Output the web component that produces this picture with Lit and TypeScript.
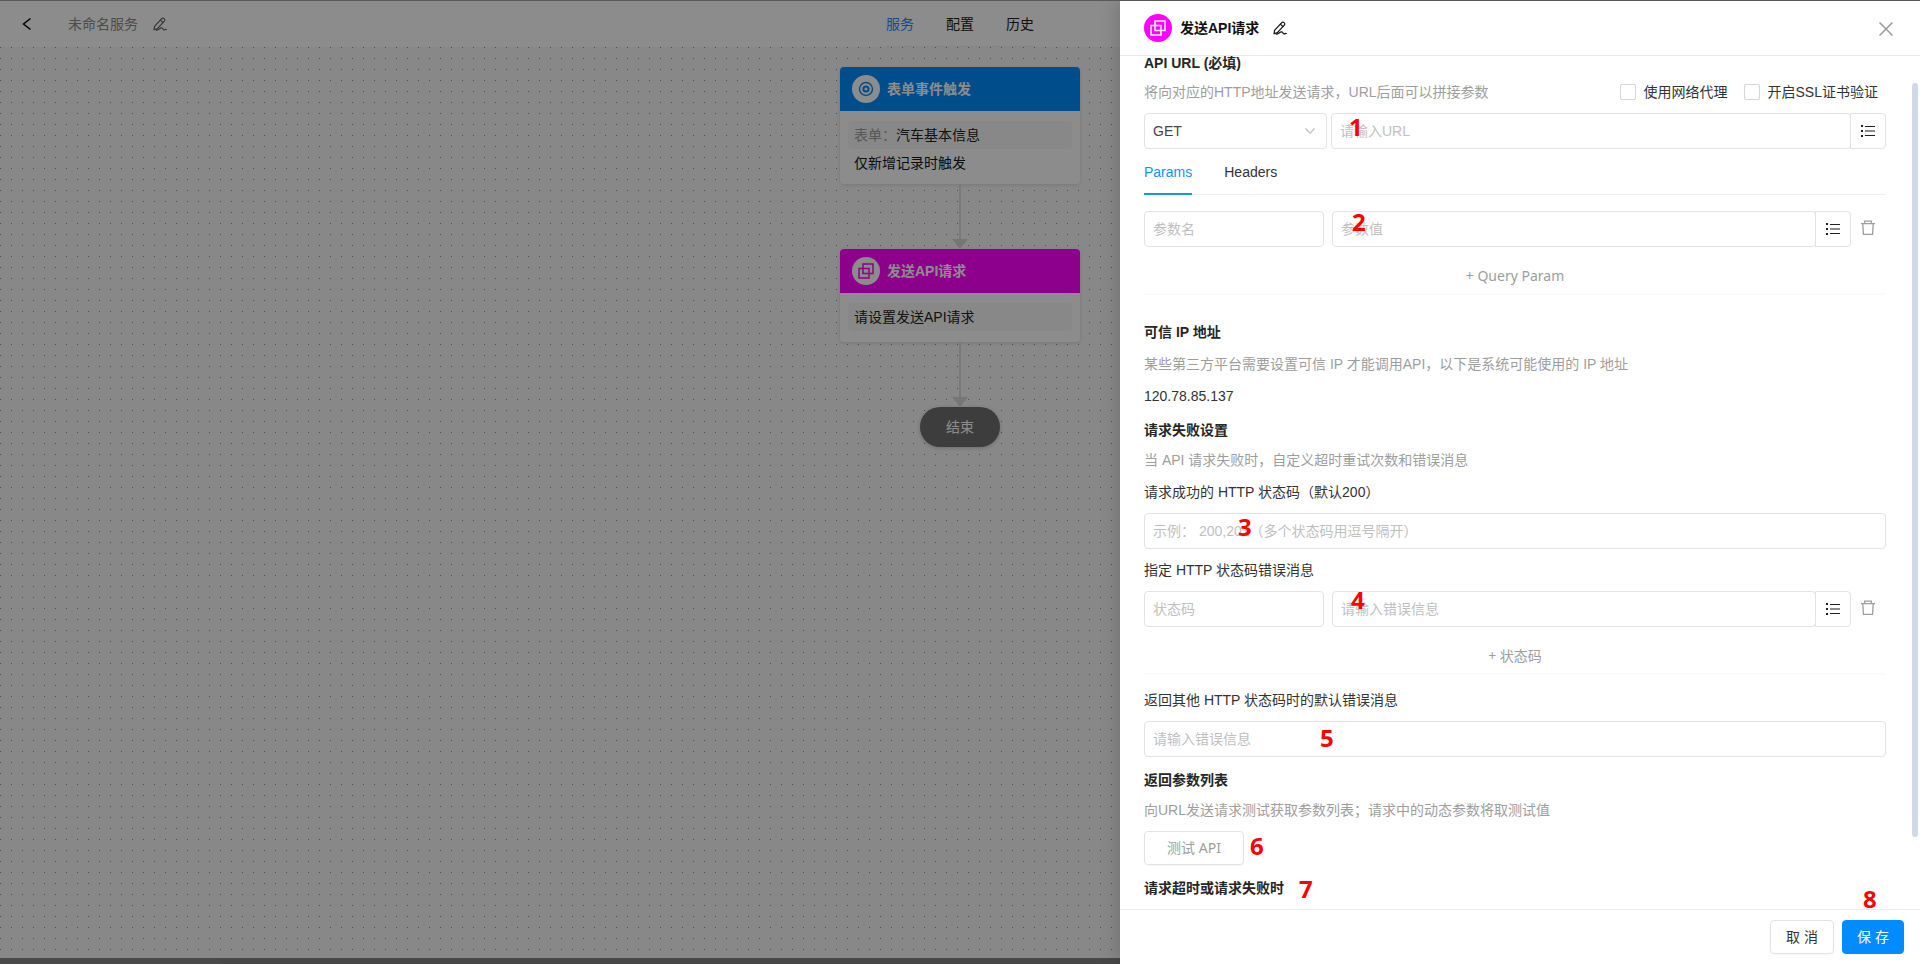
import { LitElement, html, css, svg, nothing } from "lit";
import { customElement, property, state } from "lit/decorators.js";
import { classMap } from "lit/directives/class-map.js";

const editIcon = svg`<svg width="14" height="14" viewBox="0 0 14 14" fill="none" stroke="currentColor" stroke-width="1.2" stroke-linejoin="round" stroke-linecap="round">
  <path d="M1 12.8 1.7 9.2 8.8 1.6a1.5 1.5 0 0 1 2.2 0l.3.3a1.5 1.5 0 0 1 0 2.2L4.4 11.6 1 12.8Z"/>
  <path d="M7.4 3.1 9.9 5.6M3.2 13.2c2.4 0 3.6-2.6 5.6-2.3 1.4.2 1 2 2.3 1.9.9 0 1.3-.5 2.2-.3"/>
</svg>`;
const listIcon = svg`<svg width="14" height="12" viewBox="0 0 14 12" aria-hidden="true">
  <path fill="#212121" d="M0 0h2v2H0zM0 5h2v2H0zM0 10h2v2H0zM4 1h10v1H4zM4 10h10v1H4z"/><path fill="#8c8c8c" d="M4 5h10v2H4z"/>
</svg>`;
const trashIcon = svg`<svg width="14" height="16" viewBox="0 0 14 16" fill="none" stroke="#9e9e9e" stroke-width="1.3" aria-hidden="true">
  <path d="M0 3.6h14M3.6 3.4V1.2h6.8v2.2M1.8 3.8l.6 10.6h9.2l.6-10.6"/>
</svg>`;
const copyIcon = svg`<svg width="16" height="16" viewBox="0 0 16 16" fill="none" stroke="currentColor" stroke-width="1.5" aria-hidden="true">
  <path d="M5 1h10v9.500H5zM1 5.500h10V15H1z"/>
</svg>`;
const targetIcon = svg`<svg width="16" height="16" viewBox="0 0 16 16" fill="none" stroke="currentColor" aria-hidden="true">
  <circle cx="8" cy="8" r="6.500" stroke-width="1.400"/><circle cx="8" cy="8" r="2.600" stroke-width="2"/>
</svg>`;

const FONT = css`
  * { box-sizing: border-box; }
  :host, button, input, select {
    font-family: "Liberation Sans", "Noto Sans CJK SC", sans-serif;
    font-size: 14px;
    line-height: 22px;
  }
  button { margin: 0; padding: 0; border: 0; background: none; color: inherit; cursor: pointer; }
  svg { display: block; }
`;

const BADGE = css`
  .badge {
    display: flex;
    align-items: center;
    justify-content: center;
    width: 28px;
    height: 28px;
    border-radius: 50%;
  }
`;

@customElement("flow-node")
class FlowNode extends LitElement {
  @property() heading = "";
  @property() kind = "trigger";

  static styles = [FONT, BADGE, css`
    :host { display: block; width: 240px; border-radius: 4px; background: #fff; box-shadow: 0 1px 4px rgba(0, 0, 0, 0.12); }
    .head { display: flex; align-items: center; gap: 7px; height: 44px; padding: 0 12px; border-radius: 4px 4px 0 0; color: #fff; font-weight: 700; }
    .trigger { background: #008cff; }
    .api { background: #f0f; }
    .badge { background: #fff; }
    .trigger .badge { color: #008cff; }
    .api .badge { color: #f0f; }
    .body { min-height: 49px; padding: 10px 8px; }
  `];

  render() {
    return html`
      <div class=${classMap({ head: true, [this.kind]: true })}>
        <span class="badge">${this.kind === "api" ? copyIcon : targetIcon}</span>
        <span>${this.heading}</span>
      </div>
      <div class="body"><slot></slot></div>`;
  }
}

@customElement("service-canvas")
class ServiceCanvas extends LitElement {
  static styles = [FONT, css`
    :host { display: flex; flex-direction: column; height: 100%; background: #fff; color: #212121; }
    .bar { display: grid; grid-template-columns: 1fr auto 1fr; align-items: stretch; height: 46px; flex: none; }
    .left { display: flex; align-items: center; padding-left: 20px; }
    .name { margin-left: 34px; margin-right: 15px; color: #8c8c8c; }
    .edit { color: #666; }
    .tabs { display: flex; align-items: center; gap: 32px; border-bottom: 1px solid #f0f0f0; }
    .tabs a { color: inherit; text-decoration: none; }
    .tabs .on { color: #1890ff; }
    .canvas {
      flex: 1;
      display: flex;
      flex-direction: column;
      align-items: center;
      padding-top: 20px;
      background: #f8f8f8 radial-gradient(circle at 0.5px 0.5px, #8a8a8a 0 0.7px, transparent 0.8px) 0 0 / 11px 11px;
    }
    .box { padding: 3px 6px; border-radius: 4px; background: #f8f8f8; }
    .line { padding: 3px 6px 0; color: #0b1a26; }
    .key { color: #9e9e9e; }
    .link { display: flex; flex-direction: column; align-items: center; height: 65px; }
    .link::before { content: ""; flex: 1; width: 2px; background: #dcdcdc; }
    .link::after { content: ""; border: 8px solid transparent; border-top: 10px solid #d8d8d8; border-bottom: 0; }
    .end { display: flex; align-items: center; justify-content: center; width: 80px; height: 40px; border-radius: 20px; background: #707070; color: #fff; box-shadow: 0 1px 4px rgba(0, 0, 0, 0.2); }
    .track { flex: none; height: 6px; background: #7f8380; }
    .thumb { width: 222px; height: 6px; background: #888483; }
  `];

  render() {
    return html`
      <header class="bar">
        <div class="left">
          <button aria-label="返回"><svg width="14" height="14" viewBox="0 0 14 14" fill="none" stroke="#000" stroke-width="1.500"><path d="M10.500 1.500 3.500 7l7 5.500"/></svg></button>
          <span class="name">未命名服务</span>
          <button class="edit" aria-label="编辑名称">${editIcon}</button>
        </div>
        <nav class="tabs"><a class="on" href="#service">服务</a><a href="#config">配置</a><a href="#history">历史</a></nav>
      </header>
      <main class="canvas">
        <flow-node heading="表单事件触发" kind="trigger">
          <div class="box"><span class="key">表单：</span>汽车基本信息</div>
          <div class="line">仅新增记录时触发</div>
        </flow-node>
        <div class="link"></div>
        <flow-node heading="发送API请求" kind="api">
          <div class="box">请设置发送API请求</div>
        </flow-node>
        <div class="link"></div>
        <div class="end">结束</div>
      </main>
      <div class="track"><div class="thumb"></div></div>`;
  }
}

@customElement("request-drawer")
class RequestDrawer extends LitElement {
  @state() tab = "Params";

  static styles = [FONT, BADGE, css`
    :host { display: flex; flex-direction: column; background: #fff; color: #333; box-shadow: -4px 0 16px rgba(0, 0, 0, 0.15); }
    .head { display: flex; align-items: center; flex: none; height: 55px; padding: 0 24px; border-bottom: 1px solid #ebebeb; color: #111; }
    .badge { background: #f0f; color: #fff; }
    .name { margin: 0 14px 0 8px; font-size: 14px; font-weight: 700; }
    .close { margin-left: auto; padding: 2px 3px 0; }
    .body { flex: 1; min-height: 0; display: flex; }
    .form { flex: 1; min-width: 0; padding: 0 26px 0 24px; }
    .scroll { flex: none; width: 6px; margin: 27px 2px 72px 0; border-radius: 3px; background: #cfdae6; }
    h3 { position: relative; margin: 12px 0 0; font-size: 14px; font-weight: 700; line-height: 22px; color: #262626; }
    .first { margin: 0; line-height: 14px; }
    .wide { margin-top: 26px; }
    p { margin: 8px 0 0; color: #9e9e9e; }
    .loose { margin-top: 10px; }
    .dark { color: #333; }
    .intro { display: flex; justify-content: space-between; margin-top: 11px; }
    .intro p { margin: 0; }
    .checks { display: flex; gap: 16px; padding-right: 8px; }
    .check { display: flex; align-items: center; gap: 8px; }
    .check input { appearance: none; width: 16px; height: 16px; margin: 0; border: 1px solid #d6d6d6; border-radius: 2px; background: #fff; }
    .label { display: block; margin-top: 10px; }
    .after-rule { margin-top: 14px; }
    .row { display: flex; margin-top: 10px; }
    .row.method { gap: 4px; }
    .row.pair { gap: 8px; }
    .params { margin-top: 16px; }
    .key, .picker { flex: none; }
    .key { width: 180px; }
    .picker { position: relative; width: 183px; }
    .picker svg { position: absolute; right: 12px; top: 15px; pointer-events: none; }
    .group { position: relative; flex: 1; display: flex; min-width: 0; }
    input.text, select {
      appearance: none;
      display: block;
      width: 100%;
      height: 36px;
      padding: 0 8px;
      border: 1px solid #e3e3e3;
      border-radius: 4px;
      background: #fff;
      color: #444;
      outline: 0;
    }
    input.text::placeholder { color: #bfbfbf; opacity: 1; }
    .pick { flex: none; display: flex; align-items: center; justify-content: center; width: 36px; height: 36px; margin-left: -1px; padding-right: 1px; border: 1px solid #e3e3e3; border-radius: 0 4px 4px 0; }
    .trash { flex: none; width: 27px; padding: 9px 0 0 2px; align-self: flex-start; }
    .tabs { display: flex; gap: 32px; height: 46px; padding-top: 12px; border-bottom: 1px solid #efefef; }
    .tabs button { height: 34px; padding-bottom: 10px; border-bottom: 2px solid transparent; }
    .tabs .on { color: #1890ff; border-color: #1890ff; }
    .add { display: block; width: 100%; margin-top: 18px; padding-bottom: 6px; border-bottom: 2px solid #fafafa; color: #9e9e9e; font-family: "Noto Sans", "Noto Sans CJK SC", sans-serif; text-align: center; }
    .btn { position: relative; height: 34px; border: 1px solid #e3e3e3; border-radius: 4px; box-shadow: 0 1px 2px rgba(0, 0, 0, 0.04); }
    .test { width: 100px; color: #9e9e9e; font-family: "Noto Sans", "Noto Sans CJK SC", sans-serif; }
    .foot { display: flex; flex: none; justify-content: flex-end; gap: 8px; height: 55px; padding: 10px 16px 0; border-top: 1px solid #ebebeb; }
    .cancel { width: 64px; }
    .save { width: 62px; border-color: #008cff; background: #008cff; color: #fff; }
    .mark { position: absolute; z-index: 1; color: #f00; font: 700 24px/24px "Noto Sans", sans-serif; pointer-events: none; }
    .m1 { left: 18px; top: 2px; }
    .m2 { left: 20px; top: -1px; }
    .m3 { left: 94px; top: 2px; }
    .m4 { left: 19px; top: -3px; }
    .m5 { left: 176px; top: 5px; }
    .m6 { left: 106px; top: 3px; }
    .m7 { left: 155px; top: 0; }
    .m8 { left: 20px; top: -34px; }
  `];

  private mark(n: number) {
    return html`<span class="mark m${n}">${n}</span>`;
  }

  private field(placeholder: string, id: string, n: number, picker: boolean) {
    return html`<div class="group">
      <input class="text" id=${id} aria-label=${placeholder} placeholder=${placeholder} />
      ${picker ? html`<button class="pick" aria-label="选择字段">${listIcon}</button>` : nothing}
      ${this.mark(n)}
    </div>`;
  }

  render() {
    return html`
      <header class="head">
        <span class="badge">${copyIcon}</span>
        <h2 class="name">发送API请求</h2>
        <button aria-label="编辑名称">${editIcon}</button>
        <button class="close" aria-label="关闭"><svg width="14" height="14" viewBox="0 0 14 14" stroke="#999" stroke-width="1.500"><path d="M.5.5l13 13M13.500.5l-13 13"/></svg></button>
      </header>
      <div class="body">
        <div class="form">
          <h3 class="first">API URL (必填)</h3>
          <div class="intro">
            <p>将向对应的HTTP地址发送请求，URL后面可以拼接参数</p>
            <div class="checks">
              <label class="check"><input type="checkbox" />使用网络代理</label>
              <label class="check"><input type="checkbox" />开启SSL证书验证</label>
            </div>
          </div>
          <div class="row method">
            <div class="picker">
              <select aria-label="请求方式"><option>GET</option><option>POST</option><option>PUT</option><option>DELETE</option></select>
              <svg width="10" height="6" viewBox="0 0 10 6" fill="none" stroke="#bfbfbf" stroke-width="1.200"><path d="M.5.5 5 5.200 9.500.5"/></svg>
            </div>
            ${this.field("请输入URL", "url", 1, true)}
          </div>
          <div class="tabs" role="tablist">
            ${["Params", "Headers"].map((t) => html`<button role="tab" class=${classMap({ on: t === this.tab })} @click=${() => (this.tab = t)}>${t}</button>`)}
          </div>
          <div class="row pair params">
            <div class="key"><input class="text" aria-label="参数名" placeholder="参数名" /></div>
            ${this.field("参数值", "param", 2, true)}
            <button class="trash" aria-label="删除参数">${trashIcon}</button>
          </div>
          <button class="add">+ Query Param</button>

          <h3 class="wide">可信 IP 地址</h3>
          <p class="loose">某些第三方平台需要设置可信 IP 才能调用API，以下是系统可能使用的 IP 地址</p>
          <p class="loose dark">120.78.85.137</p>

          <h3>请求失败设置</h3>
          <p>当 API 请求失败时，自定义超时重试次数和错误消息</p>
          <label class="label" for="ok">请求成功的 HTTP 状态码（默认200）</label>
          <div class="row">${this.field("示例： 200,201（多个状态码用逗号隔开）", "ok", 3, false)}</div>
          <label class="label" for="code">指定 HTTP 状态码错误消息</label>
          <div class="row pair">
            <div class="key"><input class="text" id="code" placeholder="状态码" /></div>
            ${this.field("请输入错误信息", "message", 4, true)}
            <button class="trash" aria-label="删除状态码">${trashIcon}</button>
          </div>
          <button class="add">+ 状态码</button>
          <label class="label after-rule" for="fallback">返回其他 HTTP 状态码时的默认错误消息</label>
          <div class="row">${this.field("请输入错误信息", "fallback", 5, false)}</div>

          <h3>返回参数列表</h3>
          <p>向URL发送请求测试获取参数列表；请求中的动态参数将取测试值</p>
          <div class="row"><div class="group"><button class="btn test">测试 API</button>${this.mark(6)}</div></div>
          <h3>请求超时或请求失败时${this.mark(7)}</h3>
        </div>
        <div class="scroll"></div>
      </div>
      <footer class="foot">
        <button class="btn cancel">取 消</button>
        <button class="btn save">保 存${this.mark(8)}</button>
      </footer>`;
  }
}

@customElement("app-root")
class AppRoot extends LitElement {
  static styles = css`
    :host { display: block; position: relative; height: 100vh; box-sizing: border-box; border-top: 1px solid #56585a; overflow: hidden; }
    .mask { position: absolute; inset: 0; background: rgba(0, 0, 0, 0.45); }
    .drawer { position: absolute; top: 0; right: 0; bottom: 0; width: 800px; max-width: 100%; }
  `;

  render() {
    return html`
      <service-canvas></service-canvas>
      <div class="mask"></div>
      <request-drawer class="drawer"></request-drawer>`;
  }
}
